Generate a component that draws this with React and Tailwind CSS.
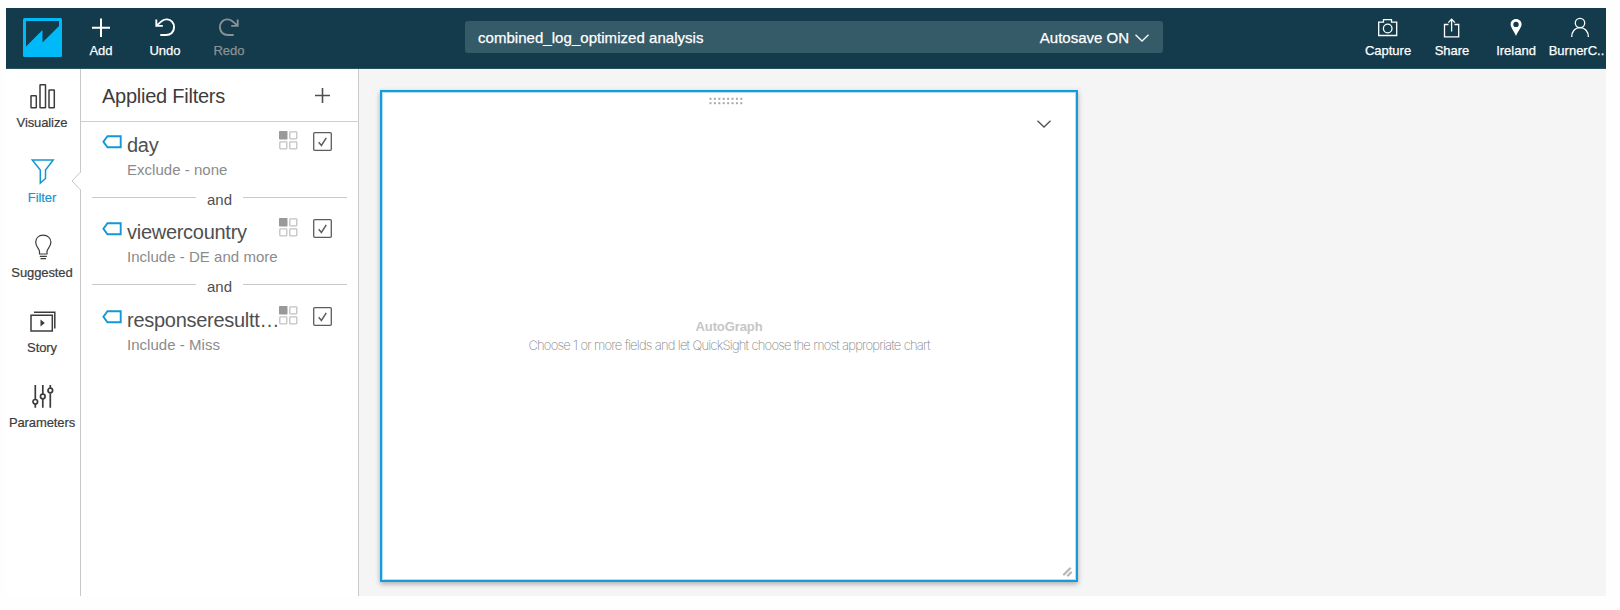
import React from "react";

function Icon({ children, className = "", size = 28 }) {
  return (
    <svg
      width={size}
      height={size}
      viewBox={`0 0 ${size} ${size}`}
      fill="none"
      stroke="currentColor"
      className={`block shrink-0 ${className}`}
    >
      {children}
    </svg>
  );
}

function ToolItem({ label, children, className = "", labelClass = "" }) {
  return (
    <button className={`flex w-16 shrink-0 flex-col items-center pt-[6px] text-white ${className}`}>
      <Icon>{children}</Icon>
      <span className={`mt-px text-[13px] leading-4 whitespace-nowrap [-webkit-text-stroke:0.25px] ${labelClass}`}>{label}</span>
    </button>
  );
}

function Header() {
  return (
    <header className="flex h-[61px] shrink-0 border-b border-[#2b5263] bg-[#133b4b]">
      <svg width="39" height="39" viewBox="0 0 39 39" className="mt-[9.5px] ml-[17px] block shrink-0">
        <rect width="39" height="39" rx="1.5" fill="#00b9f8" />
        <path d="M3 3H36V8L19.5 24.5V12L3 28.5Z" fill="#133b4b" />
      </svg>
      <div className="ml-[7px] flex">
        <ToolItem label="Add">
          <path d="M14 4.5V23M5 13.8H23" strokeWidth="2" />
        </ToolItem>
        <ToolItem label="Undo">
          <path d="M5.3 5.5V11.9H11.8M5.8 11.4L11 6.9C14 4.5 18.5 5 21 7.7C23.9 10.8 23.7 16 20.7 19C19 20.6 17.2 21 15 21H9.3" strokeWidth="1.9" />
        </ToolItem>
        <ToolItem label="Redo" className="text-[#8b9296]!">
          <path d="M22.7 5.5V11.9H16.2M22.2 11.4L17 6.9C14 4.5 9.5 5 7 7.7C4.1 10.8 4.3 16 7.3 19C9 20.6 10.8 21 13 21H18.7" strokeWidth="1.9" />
        </ToolItem>
      </div>
      <div className="mt-[13px] ml-[204px] flex h-8 w-[698px] shrink-0 items-center rounded-[3px] bg-[#355a68] pr-[14px] pl-[13px] text-[15px] text-white [-webkit-text-stroke:0.25px]">
        <span className="grow pt-[2px] tracking-[0.04px]">combined_log_optimized analysis</span>
        <span className="pt-[3px]">Autosave ON</span>
        <svg width="14" height="8" viewBox="0 0 14 8" className="mt-[2px] ml-[6px]" fill="none" stroke="currentColor" strokeWidth="1.3">
          <path d="M.5 .7L7 7L13.5 .7" />
        </svg>
      </div>
      <div className="ml-auto flex w-[250px]">
        <ToolItem label="Capture">
          <path d="M4.7 8.2H9.5V5.7H17.5V8.2H22.7V21.5H4.7Z" strokeWidth="1.3" />
          <circle cx="13.7" cy="14.5" r="4.3" strokeWidth="1.3" />
        </ToolItem>
        <ToolItem label="Share">
          <path d="M10.5 10.5H6.5V22.8H20.7V10.5H16.5M13.6 17.5V5.5M10.3 8.6L13.6 5.2L16.9 8.6" strokeWidth="1.3" />
        </ToolItem>
        <ToolItem label="Ireland">
          <path fillRule="evenodd" fill="currentColor" stroke="none" d="M14 5C10.9 5 8.6 7.3 8.6 10.3C8.6 13.5 12 17 14 22C16 17 19.6 13.5 19.6 10.3C19.6 7.3 17.2 5 14 5ZM14 7.7A2.7 2.7 0 1 1 14 13.1A2.7 2.7 0 1 1 14 7.7Z" />
        </ToolItem>
        <ToolItem label="BurnerC.." labelClass="mr-[7px]">
          <circle cx="14" cy="9" r="4.7" strokeWidth="1.3" />
          <path d="M5.7 23C5.7 17.5 9 13.7 14 13.7C19 13.7 22.4 17.5 22.4 23" strokeWidth="1.3" />
        </ToolItem>
      </div>
    </header>
  );
}

function NavItem({ label, children, active }) {
  return (
    <div className={`flex h-[75px] flex-col items-center pt-[13px] pr-[2px] ${active ? "text-[#1397d6]" : "text-[#3c3c3c]"}`}>
      <Icon className="ml-px">{children}</Icon>
      <span className="mt-[5px] text-[13px] leading-4 tracking-[-0.1px] [-webkit-text-stroke:0.2px]">{label}</span>
    </div>
  );
}

function Sidebar() {
  return (
    <nav className="relative w-[75px] shrink-0 border-r border-[#c9c9c9]">
      <NavItem label="Visualize">
        <g strokeWidth="1.5">
          <rect x="2" y="13.7" width="5.3" height="12" rx=".5" />
          <rect x="11" y="2.8" width="5.5" height="22.9" rx=".5" />
          <rect x="20" y="8" width="5.3" height="17.7" rx=".5" />
        </g>
      </NavItem>
      <NavItem label="Filter" active>
        <path d="M3.3 3H24.2L16.5 13V21.5L11.3 26V13Z" strokeWidth="1.5" />
      </NavItem>
      <NavItem label="Suggested">
        <path d="M10.5 22V19.5C10.5 17 6.7 14.5 6.7 10.3C6.7 6 9.8 3.2 14.2 3.2C18.5 3.2 21.9 6 21.9 10.3C21.9 14.5 18 17 18 19.5V22ZM10.8 24.3H17.8M11.5 26.6H17" strokeWidth="1.2" />
      </NavItem>
      <NavItem label="Story">
        <path d="M5 5.200H25.8V21.500M2 8.200H23.3V24H2Z" strokeWidth="1.5" />
        <path d="M11.5 12.500V19.500L15.8 16Z" fill="currentColor" stroke="none" />
      </NavItem>
      <NavItem label="Parameters">
        <g strokeWidth="1.7">
          <path d="M6.3 3V17M6.3 22V25.7M13.8 3V12M13.8 17V25.7M21.3 3V6.5M21.3 11.5V25.7" />
          <circle cx="6.3" cy="19.8" r="2.3" />
          <circle cx="13.8" cy="14.5" r="2.3" />
          <circle cx="21.3" cy="8.5" r="2.3" />
        </g>
      </NavItem>
      <svg width="10" height="18" viewBox="0 0 10 18" className="absolute top-[103px] right-[-1px]">
        <path d="M9.5 0L1 9L9.5 18" fill="white" stroke="#c4c4c4" />
        <path d="M9.5 1V17" stroke="white" strokeWidth="1.5" />
      </svg>
    </nav>
  );
}

function FilterRow({ name, detail }) {
  return (
    <div className="flex h-[63px] pl-[21px]">
      <svg width="20" height="14" viewBox="0 0 20 14" className="mt-[13px] shrink-0" fill="none" stroke="#1397d6" strokeWidth="1.9">
        <path d="M5.5 1.2H18.7V12.3H5.5L1.4 6.7Z" />
      </svg>
      <div className="ml-[5px] w-[151px] shrink-0">
        <div className="mt-[11px] text-[20px] leading-6 tracking-[-0.28px] whitespace-nowrap text-[#4f4f4f]">{name}</div>
        <div className="mt-[3px] text-[15px] leading-5 tracking-[0.03px] whitespace-nowrap text-[#8b8b8b]">{detail}</div>
      </div>
      <svg width="19" height="19" viewBox="0 0 19 19" className="mt-[9px] ml-px shrink-0" fill="none" stroke="#c2c2c2" strokeWidth="1.3">
        <rect x="0" y="0" width="8.5" height="8.5" rx=".7" fill="#999" stroke="none" />
        <rect x="10.8" y=".8" width="7" height="7" rx=".7" />
        <rect x=".8" y="10.8" width="7" height="7" rx=".7" />
        <rect x="10.8" y="10.8" width="7" height="7" rx=".7" />
      </svg>
      <svg width="19" height="19" viewBox="0 0 19 19" className="mt-[10px] ml-[15px] shrink-0" fill="none" stroke="#5c5c5c" strokeWidth="1.3">
        <rect x=".7" y=".7" width="17.6" height="17.6" rx="1" />
        <path d="M5.7 10.2L8.4 13.4L13.3 5.8" strokeWidth="1.5" />
      </svg>
    </div>
  );
}

function Joiner() {
  return (
    <div className="flex h-[24.4px] gap-[11px] px-[11px]">
      <span className="mt-[12px] h-px grow bg-[#c9c9c9]" />
      <span className="mt-[5px] text-[15px] leading-5 text-[#4f4f4f]">and</span>
      <span className="mt-[12px] h-px grow bg-[#c9c9c9]" />
    </div>
  );
}

function FiltersPanel() {
  return (
    <aside className="w-[278px] shrink-0 border-r border-[#c9c9c9]">
      <div className="flex h-[53px] items-center border-b border-[#cfcfcf] pr-[28px] pl-[21px]">
        <h2 className="grow pt-[2px] text-[20px] leading-6 tracking-[-0.25px] text-[#3c3c3c]">Applied Filters</h2>
        <svg width="15" height="15" viewBox="0 0 15 15" stroke="#4f4f4f" strokeWidth="1.6">
          <path d="M7.500 0V15M0 7.500H15" />
        </svg>
      </div>
      <FilterRow name="day" detail="Exclude - none" />
      <Joiner />
      <FilterRow name="viewercountry" detail="Include - DE and more" />
      <Joiner />
      <FilterRow name="responseresultt…" detail="Include - Miss" />
    </aside>
  );
}

function Canvas() {
  return (
    <main className="grow bg-[#f5f5f5] pt-[21px] pl-[21px]">
      <section className="flex h-[492px] w-[698px] flex-col items-center border-2 border-[#149bdb] bg-white shadow-[inset_0_0_0_1px_#b5dff2,0_2px_5px_rgba(0,0,0,0.3)]">
        <svg width="34" height="8" viewBox="0 0 34 8" className="mt-[5px] mr-[6px] block" fill="#a8a8a8">
          {[0, 1, 2, 3, 4, 5, 6, 7].map((i) => (
            <g key={i}>
              <rect x={i * 4.4 + 0.5} y=".8" width="2" height="2" />
              <rect x={i * 4.4 + 0.5} y="5.2" width="2" height="2" />
            </g>
          ))}
        </svg>
        <svg width="14" height="8" viewBox="0 0 14 8" className="mt-[15px] mr-[25px] self-end" fill="none" stroke="#4f4f4f" strokeWidth="1.3">
          <path d="M.5 .7L7 7L13.5 .7" />
        </svg>
        <div className="mt-[190px] text-center">
          <div className="text-[13px] leading-[18px] font-bold tracking-[-0.1px] text-[#c6c6c6]">AutoGraph</div>
          <div className="font-[Inter] text-[13px] leading-[18px] font-extralight tracking-[-0.8px] text-[#858585] [word-spacing:0.3px]">
            Choose 1 or more fields and let QuickSight choose the most appropriate chart
          </div>
        </div>
        <svg width="11" height="10" viewBox="0 0 11 10" className="mt-auto mr-[3px] mb-[3px] self-end" stroke="#b8b8b8" strokeWidth="2.4" strokeLinecap="round">
          <path d="M2 7.5L8 1.5M6 8.5L9 5.5" />
        </svg>
      </section>
    </main>
  );
}

export default function App() {
  return (
    <div className="h-[610px] w-[1620px] overflow-hidden bg-[#fefefe] pt-2 pl-[6px] font-['Liberation_Sans',Arial,sans-serif]">
      <div className="flex h-[588px] w-[1600px] flex-col">
        <Header />
        <div className="flex min-h-0 grow bg-white">
          <Sidebar />
          <FiltersPanel />
          <Canvas />
        </div>
      </div>
    </div>
  );
}
